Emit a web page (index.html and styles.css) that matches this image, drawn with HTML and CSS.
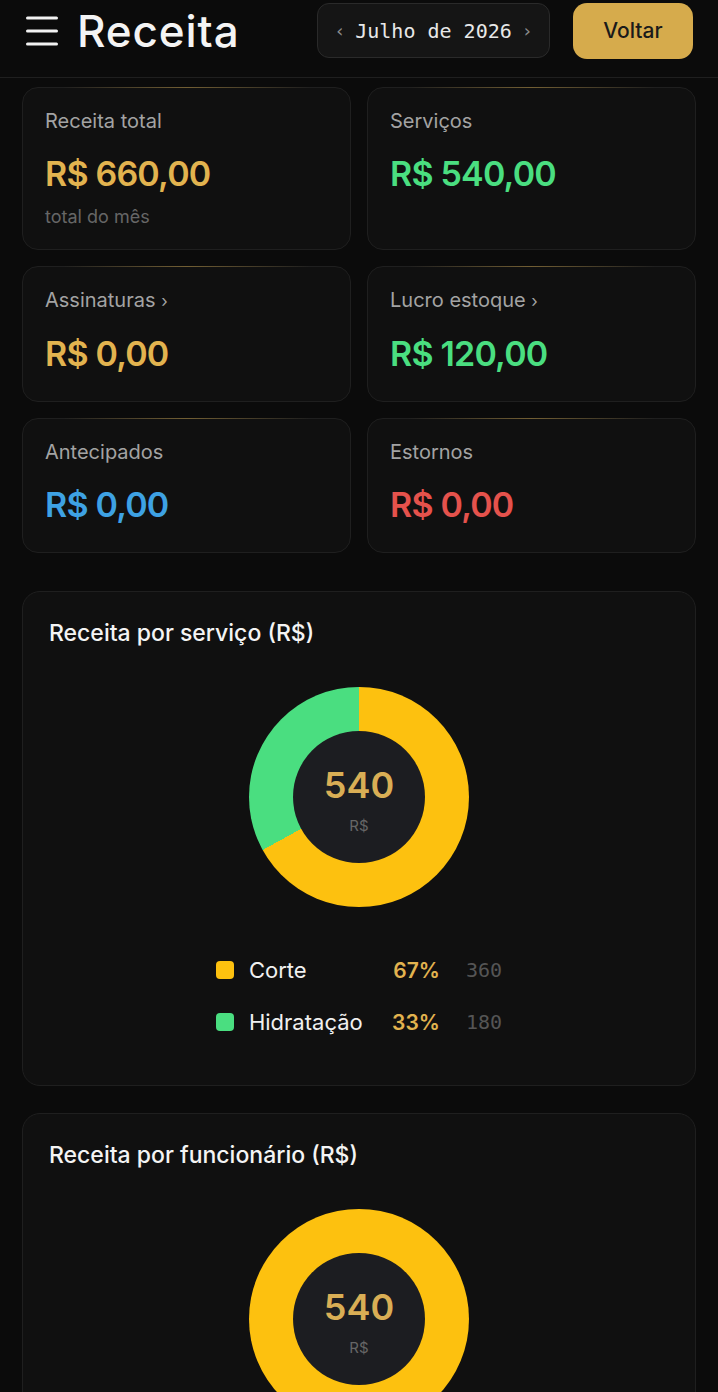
FILE: index.html
```html
<!DOCTYPE html>
<html lang="pt-BR">

<head>
    <meta charset="UTF-8">
    <meta name="viewport" content="width=device-width, initial-scale=1.0">
    <title>Receita</title>
    <link rel="stylesheet" href="styles.css">
</head>

<body>
    <header class="topbar">
        <div class="topbar-left">
            <button class="menu-btn" aria-label="Menu">
                <svg width="32" height="30" viewBox="0 0 32 30">
                    <path d="M1.5 2h29M1.5 15h29M1.5 28h29" stroke="#f2f2f2" stroke-width="3" stroke-linecap="round" />
                </svg>
            </button>
            <h1 class="page-title">Receita</h1>
        </div>
        <div class="month-picker">
            <span class="chev">‹</span>
            <span class="month-label">Julho de 2026</span>
            <span class="chev">›</span>
        </div>
        <button class="back-btn">Voltar</button>
    </header>

    <main class="content">
        <div class="stats-grid">
            <div class="stat-card">
                <div class="stat-label">Receita total</div>
                <div class="stat-value gold">R$ 660,00</div>
                <div class="stat-sub">total do mês</div>
            </div>
            <div class="stat-card">
                <div class="stat-label">Serviços</div>
                <div class="stat-value green">R$ 540,00</div>
            </div>
            <div class="stat-card">
                <div class="stat-label">Assinaturas <span class="arrow">›</span></div>
                <div class="stat-value gold">R$ 0,00</div>
            </div>
            <div class="stat-card">
                <div class="stat-label">Lucro estoque <span class="arrow">›</span></div>
                <div class="stat-value green">R$ 120,00</div>
            </div>
            <div class="stat-card">
                <div class="stat-label">Antecipados</div>
                <div class="stat-value blue">R$ 0,00</div>
            </div>
            <div class="stat-card">
                <div class="stat-label">Estornos</div>
                <div class="stat-value red">R$ 0,00</div>
            </div>
        </div>

        <section class="chart-card first">
            <h2 class="chart-title">Receita por serviço (R$)</h2>
            <div class="donut donut-split">
                <div class="donut-hole">
                    <span class="donut-num">540</span>
                    <span class="donut-unit">R$</span>
                </div>
            </div>
            <div class="legend">
                <div class="legend-row">
                    <span class="swatch yellow"></span>
                    <span class="legend-name">Corte</span>
                    <span class="legend-pct">67%</span>
                    <span class="legend-val">360</span>
                </div>
                <div class="legend-row">
                    <span class="swatch mint"></span>
                    <span class="legend-name">Hidratação</span>
                    <span class="legend-pct">33%</span>
                    <span class="legend-val">180</span>
                </div>
            </div>
        </section>

        <section class="chart-card">
            <h2 class="chart-title">Receita por funcionário (R$)</h2>
            <div class="donut donut-full">
                <div class="donut-hole">
                    <span class="donut-num">540</span>
                    <span class="donut-unit">R$</span>
                </div>
            </div>
        </section>
    </main>
</body>

</html>
```

FILE: styles.css
```css
body {
    margin: 0;
    padding: 0;
    background-color: #0b0b0b;
    font-family: Inter, "Noto Sans", sans-serif;
    color: #f2f2f2;
}

.topbar {
    height: 78px;
    box-sizing: border-box;
    display: flex;
    align-items: center;
    padding: 0 25px 16px 26px;
    border-bottom: 1px solid #1f1f1f;
}

.topbar-left {
    display: flex;
    align-items: center;
    gap: 19px;
}

.menu-btn {
    background: none;
    border: none;
    padding: 0;
    display: flex;
}

.page-title {
    margin: 0;
    font-size: 44px;
    line-height: 50px;
    font-weight: 500;
    letter-spacing: 0.9px;
    color: #f4f4f4;
}

.month-picker {
    width: 233px;
    height: 55px;
    box-sizing: border-box;
    margin-left: auto;
    display: flex;
    align-items: center;
    justify-content: center;
    gap: 10px;
    background-color: #151515;
    border: 1px solid #2a2a2a;
    border-radius: 12px;
    font-family: "DejaVu Sans Mono", monospace;
}

.month-label {
    font-size: 20px;
    color: #e8e8e8;
}

.chev {
    font-size: 18px;
    color: #8a8a8a;
}

.back-btn {
    width: 120px;
    height: 56px;
    margin-left: 23px;
    background-color: #d6ab4c;
    border: none;
    border-radius: 14px;
    font-family: Inter, sans-serif;
    font-size: 21px;
    font-weight: 500;
    color: #1a1a1a;
}

.content {
    padding: 9px 22px 40px;
}

.stats-grid {
    display: grid;
    grid-template-columns: 1fr 1fr;
    gap: 16px;
}

.stat-card {
    position: relative;
    background-color: #101010;
    border: 1px solid #1f1f1f;
    border-radius: 16px;
    padding: 21px 22px 21px;
}

.stat-card::before {
    content: "";
    position: absolute;
    top: -1px;
    left: 40px;
    right: 40px;
    height: 1px;
    background: linear-gradient(90deg, rgba(214, 171, 76, 0), rgba(214, 171, 76, 0.45), rgba(214, 171, 76, 0));
}

.stat-label {
    font-size: 20px;
    line-height: 24px;
    color: #a3a3a3;
}

.arrow {
    font-size: 17px;
}

.stat-value {
    margin-top: 21px;
    margin-bottom: 6px;
    font-size: 34px;
    line-height: 40px;
    font-weight: 600;
    letter-spacing: -0.8px;
}

.stat-sub {
    margin-top: 12px;
    font-size: 18px;
    line-height: 22px;
    color: #666;
}

.gold {
    color: #e2b34f;
}

.green {
    color: #4ade80;
}

.blue {
    color: #3ea2e4;
}

.red {
    color: #e5524c;
}

.chart-card {
    background-color: #101010;
    border: 1px solid #1f1f1f;
    border-radius: 18px;
    padding: 26px 26px 49px;
    margin-top: 27px;
    display: flex;
    flex-direction: column;
    align-items: center;
}

.chart-card.first {
    margin-top: 38px;
}

.chart-title {
    align-self: flex-start;
    margin: 0;
    font-size: 23px;
    line-height: 30px;
    font-weight: 500;
    color: #f4f4f4;
}

.donut {
    width: 220px;
    height: 220px;
    border-radius: 50%;
    margin-top: 39px;
    display: flex;
    align-items: center;
    justify-content: center;
}

.donut-split {
    background: conic-gradient(#fdc10f 0 67%, #4ade80 67% 100%);
}

.donut-full {
    background: #fdc10f;
}

.donut-hole {
    width: 132px;
    height: 132px;
    border-radius: 50%;
    background-color: #1c1d21;
    display: flex;
    flex-direction: column;
    align-items: center;
    justify-content: center;
}

.donut-num {
    font-size: 36px;
    line-height: 40px;
    font-weight: 600;
    color: #d9ae55;
    margin-top: 6px;
}

.donut-unit {
    font-size: 15px;
    color: #666;
    margin-top: 11px;
}

.legend {
    margin-top: 49px;
    display: flex;
    flex-direction: column;
    gap: 24px;
}

.legend-row {
    display: flex;
    align-items: center;
    height: 28px;
}

.swatch {
    width: 18px;
    height: 18px;
    border-radius: 4px;
    margin-right: 15px;
}

.swatch.yellow {
    background-color: #fdc10f;
}

.swatch.mint {
    background-color: #4ade80;
}

.legend-name {
    width: 130px;
    font-size: 22px;
    color: #f0f0f0;
}

.legend-pct {
    width: 61px;
    text-align: right;
    font-size: 21px;
    font-weight: 600;
    color: #e2b34f;
}

.legend-val {
    margin-left: 26px;
    font-family: "DejaVu Sans Mono", monospace;
    font-size: 20px;
    color: #555;
}
```
